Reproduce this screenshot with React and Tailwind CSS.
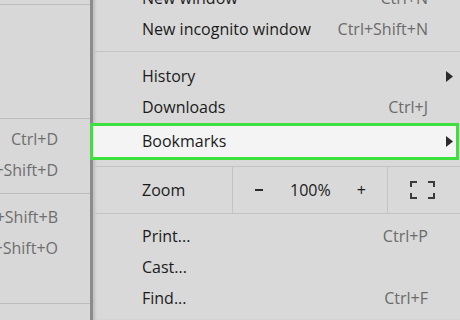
import React from 'react';

const Arrow = () => (
  <svg width="7" height="11" viewBox="0 0 7 11" className="block">
    <path d="M0 0 L7 5.5 L0 11 Z" fill="#2b2b2b" />
  </svg>
);

const Row = ({ label, shortcut, arrow }) => (
  <div className="flex items-center h-[31px] leading-[31px] pl-[49px] pr-[7px]">
    <span className="text-[#1b1b1b]">{label}</span>
    <span className="flex-1" />
    {shortcut && <span className="text-[#6b6b6b] mr-[25px]">{shortcut}</span>}
    {arrow && <Arrow />}
  </div>
);

const FullscreenIcon = () => (
  <svg width="25" height="18" viewBox="0 0 25 18" className="block">
    <g fill="none" stroke="#3a3a3a" strokeWidth="2">
      <path d="M1 6 V1 H7" />
      <path d="M18 1 H24 V6" />
      <path d="M1 12 V17 H7" />
      <path d="M18 17 H24 V12" />
    </g>
  </svg>
);

const App = () => {
  return (
    <div
      className="w-[460px] h-[320px] overflow-hidden flex bg-[#d9d9d9] text-[16px]"
      style={{ fontFamily: '"Open Sans", "Noto Sans", sans-serif' }}
    >
      {/* submenu behind */}
      <div className="w-[90px] shrink-0 flex flex-col bg-[#d8d8d8] text-[#6e6e6e]">
        <div className="h-[4px]" />
        <div className="h-px bg-[#bdbdbd]" />
        <div className="h-[113px]" />
        <div className="h-px bg-[#bdbdbd]" />
        <div className="h-[5px]" />
        <div className="h-[31px] leading-[31px] flex justify-end pr-[32px] whitespace-nowrap overflow-hidden">Ctrl+D</div>
        <div className="h-[31px] leading-[31px] flex justify-end pr-[32px] whitespace-nowrap overflow-hidden">Ctrl+Shift+D</div>
        <div className="h-[7px]" />
        <div className="h-px bg-[#bdbdbd]" />
        <div className="h-[8px]" />
        <div className="h-[31px] leading-[31px] flex justify-end pr-[32px] whitespace-nowrap overflow-hidden">Ctrl+Shift+B</div>
        <div className="h-[31px] leading-[31px] flex justify-end pr-[32px] whitespace-nowrap overflow-hidden">Ctrl+Shift+O</div>
        <div className="h-[39px]" />
        <div className="h-px bg-[#bdbdbd]" />
      </div>
      <div className="w-[3px] shrink-0 bg-[#8c8c8c]" />

      {/* main menu */}
      <div className="flex-1 flex flex-col -mt-[17px] shadow-[inset_3px_0_3px_-1px_rgba(0,0,0,0.12)]">
        <Row label="New window" shortcut="Ctrl+N" />
        <Row label="New incognito window" shortcut="Ctrl+Shift+N" />
        <div className="h-[6px]" />
        <div className="h-px bg-[#c3c3c3]" />
        <div className="h-[9px]" />
        <Row label="History" arrow />
        <Row label="Downloads" shortcut="Ctrl+J" />
        <div className="relative z-10 -ml-[3px] mr-[1px] border-[3px] border-[#3ee03e] bg-[#f4f4f4]">
          <div className="flex items-center h-[31px] leading-[31px] pl-[49px] pr-[3px]">
            <span className="text-[#1b1b1b]">Bookmarks</span>
            <span className="flex-1" />
            <Arrow />
          </div>
        </div>
        <div className="h-[6px]" />
        <div className="h-px bg-[#c3c3c3]" />
        <div className="flex h-[46px] items-center">
          <div className="w-[139px] pl-[49px] text-[#1b1b1b]">Zoom</div>
          <div className="w-px self-stretch bg-[#c3c3c3]" />
          <div className="w-[154px] flex items-center text-[#1b1b1b]">
            <span className="ml-[22px] w-[8px] h-[2px] bg-[#2b2b2b]" />
            <span className="ml-[27px]">100%</span>
            <span className="ml-[26px]">+</span>
          </div>
          <div className="w-px self-stretch bg-[#c3c3c3]" />
          <div className="flex-1 flex justify-center pr-[4px]">
            <FullscreenIcon />
          </div>
        </div>
        <div className="h-px bg-[#c3c3c3]" />
        <div className="h-[7px]" />
        <Row label="Print..." shortcut="Ctrl+P" />
        <Row label="Cast..." />
        <Row label="Find..." shortcut="Ctrl+F" />
      </div>
    </div>
  );
};

export default App;
